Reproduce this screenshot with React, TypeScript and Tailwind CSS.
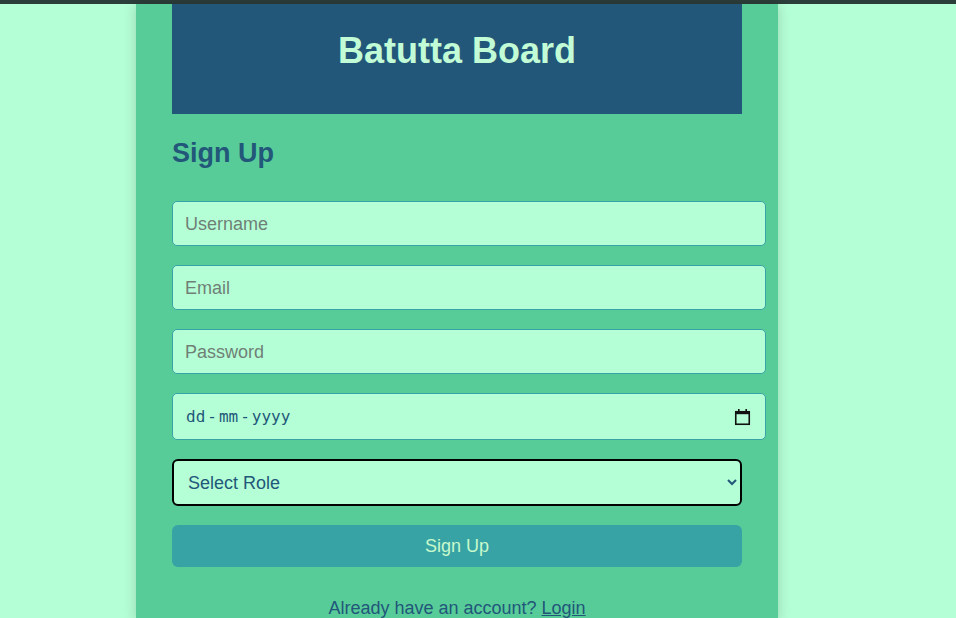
import { useState } from "react";

const inputClass =
  "w-[594px] h-[45px] px-3 pt-[2px] rounded-[5px] border border-[#38a3a5] bg-[#b5ffd6] text-[18px] text-[#22577a] placeholder:text-[#6f7f76] outline-none";

const CalendarIcon = () => (
  <svg width="17" height="18" viewBox="0 0 17 18" fill="none">
    <rect x="1.75" y="3.75" width="13.5" height="12.5" stroke="#111" strokeWidth="1.6" />
    <rect x="1" y="3" width="15" height="3.2" fill="#111" />
    <rect x="4" y="1" width="1.6" height="3" fill="#111" />
    <rect x="11.4" y="1" width="1.6" height="3" fill="#111" />
  </svg>
);

export default function App() {
  const [role, setRole] = useState("");

  return (
    <div className="min-h-screen bg-[#b5ffd6] font-['Liberation_Sans',Arial,sans-serif]">
      <div className="h-[4px] bg-[#2c3e3a]" />
      <div className="ml-[136px] w-[642px] min-h-[614px] bg-[#57cc99] px-[36px] shadow-[0_0_12px_rgba(0,0,0,0.18)]">
        <div className="h-[110px] bg-[#22577a] flex items-center justify-center pb-[16px]">
          <h1 className="text-[36px] font-bold text-[#c2fcd6]">Batutta Board</h1>
        </div>
        <h2 className="mt-[24px] text-[27px] leading-[30px] font-bold text-[#22577a]">
          Sign Up
        </h2>
        <form
          className="flex flex-col mt-[33px]"
          onSubmit={(e) => e.preventDefault()}
        >
          <input type="text" placeholder="Username" className={inputClass} />
          <input
            type="email"
            placeholder="Email"
            className={`${inputClass} mt-[19px]`}
          />
          <input
            type="password"
            placeholder="Password"
            className={`${inputClass} mt-[19px]`}
          />
          <label className="mt-[19px] w-[594px] h-[47px] pl-[13px] pr-[14px] rounded-[5px] border border-[#38a3a5] bg-[#b5ffd6] flex items-center justify-between">
            <span className="flex items-center gap-[2px] font-['DejaVu_Sans_Mono',monospace] text-[16px] text-[#22577a]">
              <span>dd</span>
              <span>-</span>
              <span>mm</span>
              <span>-</span>
              <span>yyyy</span>
            </span>
            <CalendarIcon />
          </label>
          <select
            value={role}
            onChange={(e) => setRole(e.target.value)}
            className="mt-[19px] w-[570px] h-[47px] pl-[10px] pr-2 rounded-[6px] border-2 border-black bg-[#b5ffd6] text-[18px] text-[#22577a] outline-none"
          >
            <option value="">Select Role</option>
            <option value="traveller">Traveller</option>
            <option value="guide">Guide</option>
          </select>
          <button
            type="submit"
            className="mt-[19px] w-[570px] h-[42px] rounded-[6px] bg-[#38a3a5] text-[18px] text-[#c7f9cc]"
          >
            Sign Up
          </button>
        </form>
        <p className="mt-[28px] w-[570px] text-center text-[18px] text-[#22577a]">
          Already have an account?{" "}
          <a href="#" className="underline">
            Login
          </a>
        </p>
      </div>
    </div>
  );
}
